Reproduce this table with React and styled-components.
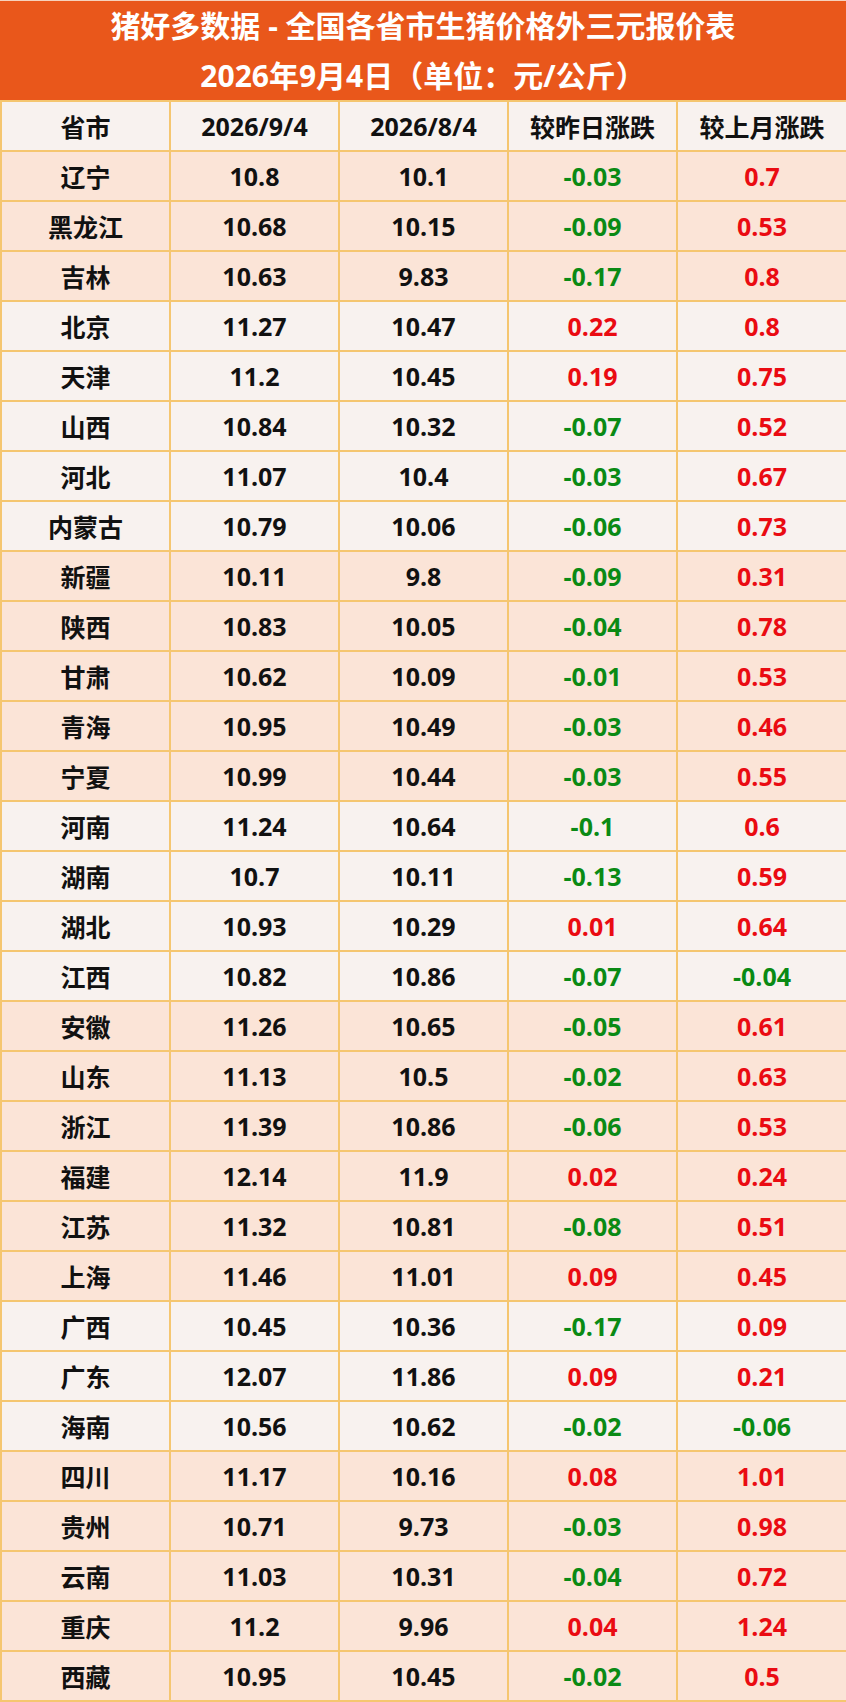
import React from 'react'
import styled, { createGlobalStyle } from 'styled-components';

const GlobalStyle = createGlobalStyle`
  html, body {
    margin: 0;
    padding: 0;
    background: #ffffff;
  }
  body {
    font-family: "Open Sans", "Noto Sans CJK SC", sans-serif;
  }
`

// 按地区分组，组之间底色交替
const groups = [
  {
    tone: 'pink', rows: [
      ['辽宁', '10.8', '10.1', '-0.03', '0.7'],
      ['黑龙江', '10.68', '10.15', '-0.09', '0.53'],
      ['吉林', '10.63', '9.83', '-0.17', '0.8'],
    ]
  },
  {
    tone: 'light', rows: [
      ['北京', '11.27', '10.47', '0.22', '0.8'],
      ['天津', '11.2', '10.45', '0.19', '0.75'],
      ['山西', '10.84', '10.32', '-0.07', '0.52'],
      ['河北', '11.07', '10.4', '-0.03', '0.67'],
      ['内蒙古', '10.79', '10.06', '-0.06', '0.73'],
    ]
  },
  {
    tone: 'pink', rows: [
      ['新疆', '10.11', '9.8', '-0.09', '0.31'],
      ['陕西', '10.83', '10.05', '-0.04', '0.78'],
      ['甘肃', '10.62', '10.09', '-0.01', '0.53'],
      ['青海', '10.95', '10.49', '-0.03', '0.46'],
      ['宁夏', '10.99', '10.44', '-0.03', '0.55'],
    ]
  },
  {
    tone: 'light', rows: [
      ['河南', '11.24', '10.64', '-0.1', '0.6'],
      ['湖南', '10.7', '10.11', '-0.13', '0.59'],
      ['湖北', '10.93', '10.29', '0.01', '0.64'],
      ['江西', '10.82', '10.86', '-0.07', '-0.04'],
    ]
  },
  {
    tone: 'pink', rows: [
      ['安徽', '11.26', '10.65', '-0.05', '0.61'],
      ['山东', '11.13', '10.5', '-0.02', '0.63'],
      ['浙江', '11.39', '10.86', '-0.06', '0.53'],
      ['福建', '12.14', '11.9', '0.02', '0.24'],
      ['江苏', '11.32', '10.81', '-0.08', '0.51'],
      ['上海', '11.46', '11.01', '0.09', '0.45'],
    ]
  },
  {
    tone: 'light', rows: [
      ['广西', '10.45', '10.36', '-0.17', '0.09'],
      ['广东', '12.07', '11.86', '0.09', '0.21'],
      ['海南', '10.56', '10.62', '-0.02', '-0.06'],
    ]
  },
  {
    tone: 'pink', rows: [
      ['四川', '11.17', '10.16', '0.08', '1.01'],
      ['贵州', '10.71', '9.73', '-0.03', '0.98'],
      ['云南', '11.03', '10.31', '-0.04', '0.72'],
      ['重庆', '11.2', '9.96', '0.04', '1.24'],
      ['西藏', '10.95', '10.45', '-0.02', '0.5'],
    ]
  },
]

const columns = ['省市', '2026/9/4', '2026/8/4', '较昨日涨跌', '较上月涨跌']

const App = () => {
  return (
    <>
      <GlobalStyle />
      <Sheet>
        <Title>
          <TitleLine>猪好多数据 - 全国各省市生猪价格外三元报价表</TitleLine>
          <TitleLine>2026年9月4日（单位：元/公斤）</TitleLine>
        </Title>
        <Table>
          <colgroup>
            <col style={{ width: 169 }} />
            <col style={{ width: 169 }} />
            <col style={{ width: 169 }} />
            <col style={{ width: 169 }} />
            <col style={{ width: 170 }} />
          </colgroup>
          <thead>
            <Row tone="light">
              {columns.map((c) => <HeadCell key={c}>{c}</HeadCell>)}
            </Row>
          </thead>
          <tbody>
            {groups.map((g) =>
              g.rows.map(([name, today, lastMonth, day, month]) => (
                <Row tone={g.tone} key={name}>
                  <Cell>{name}</Cell>
                  <Cell>{today}</Cell>
                  <Cell>{lastMonth}</Cell>
                  <Change down={day.startsWith('-')}>{day}</Change>
                  <Change down={month.startsWith('-')}>{month}</Change>
                </Row>
              ))
            )}
          </tbody>
        </Table>
      </Sheet>
    </>
  )
}

const Sheet = styled.div`
  width: 846px;
  background: #ffffff;
`

const Title = styled.div`
  background-color: #e9571b;
  display: flex;
  flex-direction: column;
  align-items: center;
  height: 100px;
  border-top: 1px solid #f6d2bd;
  box-sizing: border-box;
`

const TitleLine = styled.div`
  height: 50px;
  color: #ffffff;
  font-size: 30px;
  font-weight: 700;
  white-space: nowrap;
  &:first-child {
    line-height: 50px;
  }
  &:last-child {
    line-height: 50px;
  }
`

const Table = styled.table`
  width: 846px;
  table-layout: fixed;
  border-collapse: collapse;
  border: 2px solid #f5c670;
  border-top: none;
`

const Row = styled.tr`
  height: 50px;
  background-color: ${({ tone }) => (tone === 'pink' ? '#fbe4d7' : '#f8f2ef')};
`

const Cell = styled.td`
  border: 2px solid #f5c670;
  padding: 0;
  text-align: center;
  vertical-align: middle;
  font-size: 25px;
  font-weight: 700;
  color: #111111;
  white-space: nowrap;
`

const HeadCell = styled(Cell).attrs({ as: 'th' })``

const Change = styled(Cell)`
  color: ${({ down }) => (down ? '#0a8a14' : '#ea0b12')};
`

export default App
